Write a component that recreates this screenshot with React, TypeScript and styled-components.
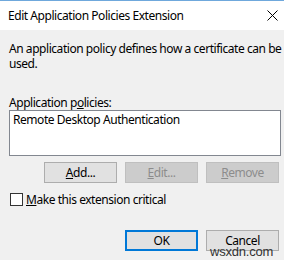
import React from 'react';
import styled, { createGlobalStyle } from 'styled-components';

const GlobalStyle = createGlobalStyle`
  html, body {
    margin: 0;
    padding: 0;
    background: #ffffff;
  }
  body {
    font-family: 'Noto Sans', 'Open Sans', Arial, sans-serif;
    font-size: 12px;
    letter-spacing: -0.45px;
    color: #000000;
  }
`;

const Window = styled.div`
  position: relative;
  width: 284px;
  height: 260px;
  overflow: hidden;
  border-top: 1px solid #6fa8dc;
  box-sizing: border-box;
  display: flex;
  flex-direction: column;
  background: #f0f0f0;
`;

const TitleBar = styled.div`
  height: 29px;
  flex: none;
  background: #ffffff;
  display: flex;
  align-items: center;
  justify-content: space-between;
  padding: 0 6px 0 8px;
`;

const Title = styled.span`
  font-size: 12px;
  color: #000000;
`;

const CloseButton = styled.div`
  width: 12px;
  height: 12px;
  display: flex;
  align-items: center;
  justify-content: center;
`;

const Body = styled.div`
  flex: 1;
  display: flex;
  flex-direction: column;
  padding: 11px 0 0 9px;
`;

const Description = styled.p`
  margin: 0;
  line-height: 15px;
`;

const FieldLabel = styled.div`
  margin-top: 24px;
  line-height: 15px;
`;

const ListBox = styled.div`
  height: 46px;
  box-sizing: border-box;
  margin-right: 3px;
  background: #ffffff;
  border: 1px solid #828790;
  padding: 1px 3px;
  line-height: 15px;
`;

const ButtonRow = styled.div<{ $top: number }>`
  display: flex;
  justify-content: flex-end;
  gap: 8px;
  margin-top: ${(p) => p.$top}px;
  padding-right: 5px;
`;

const Button = styled.div<{ $disabled?: boolean; $default?: boolean }>`
  width: 73px;
  height: 21px;
  box-sizing: border-box;
  display: flex;
  align-items: center;
  justify-content: center;
  background: ${(p) => (p.$disabled ? '#cccccc' : '#e1e1e1')};
  border: ${(p) =>
    p.$default
      ? '2px solid #0078d7'
      : p.$disabled
        ? '1px solid #bfbfbf'
        : '1px solid #adadad'};
  color: ${(p) => (p.$disabled ? '#8c8c8c' : '#000000')};
`;

const CheckRow = styled.label`
  display: flex;
  align-items: center;
  gap: 3px;
  margin-top: 9px;
  padding-left: 1px;
  line-height: 15px;
`;

const CheckBox = styled.span`
  width: 13px;
  height: 13px;
  box-sizing: border-box;
  background: #ffffff;
  border: 1px solid #333333;
`;

const Watermark = styled.span`
  position: absolute;
  left: 210px;
  top: 243px;
  font-family: 'Liberation Sans', Arial, sans-serif;
  font-size: 13px;
  color: #333333;
  letter-spacing: -0.2px;
`;

export default function App() {
  return (
    <>
      <GlobalStyle />
      <Window>
        <TitleBar>
          <Title>Edit Application Policies Extension</Title>
          <CloseButton>
            <svg width="11" height="11" viewBox="0 0 11 11">
              <path d="M0.5 0.5 L10.5 10.5 M10.5 0.5 L0.5 10.5" stroke="#000" strokeWidth="1" />
            </svg>
          </CloseButton>
        </TitleBar>
        <Body>
          <Description>
            An application policy defines how a certificate can be used.
          </Description>
          <FieldLabel>
            Application p<u>o</u>licies:
          </FieldLabel>
          <ListBox>Remote Desktop Authentication</ListBox>
          <ButtonRow $top={6}>
            <Button>
              <u>A</u>dd...
            </Button>
            <Button $disabled>
              <u>E</u>dit...
            </Button>
            <Button $disabled>
              <u>R</u>emove
            </Button>
          </ButtonRow>
          <CheckRow>
            <CheckBox />
            <span>
              <u>M</u>ake this extension critical
            </span>
          </CheckRow>
          <ButtonRow $top={23}>
            <Button $default>OK</Button>
            <Button>Cancel</Button>
          </ButtonRow>
        </Body>
        <Watermark>wsxdn.com</Watermark>
      </Window>
    </>
  );
}
